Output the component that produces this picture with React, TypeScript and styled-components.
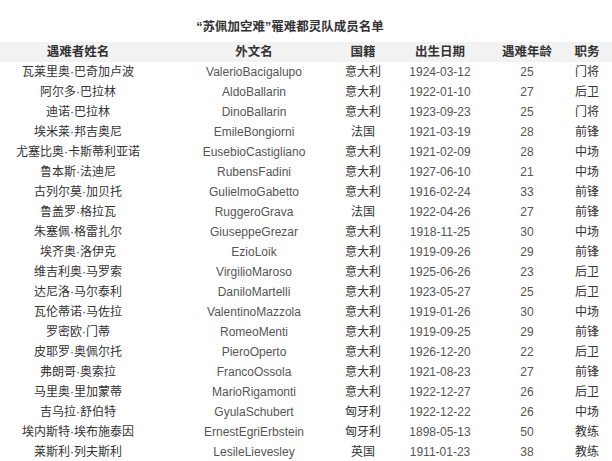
import React from 'react'
import styled, { createGlobalStyle } from 'styled-components'

const GlobalStyle = createGlobalStyle`
    html, body {
        margin: 0;
        padding: 0;
        background: #ffffff;
    }
    body {
        font-family: 'Liberation Sans', Arial, 'Noto Sans CJK SC', sans-serif;
        overflow: hidden;
    }
`

type Column = { width: number; padLeft: number; padRight: number }

// widths sum to the page width, padding nudges each centre onto the reference
const columns: Column[] = [
    { width: 166, padLeft: 0, padRight: 10 },
    { width: 142, padLeft: 34, padRight: 0 },
    { width: 94, padLeft: 16, padRight: 0 },
    { width: 82, padLeft: 0, padRight: 6 },
    { width: 73, padLeft: 13, padRight: 0 },
    { width: 55, padLeft: 5, padRight: 0 },
]

const headers = ['遇难者姓名', '外文名', '国籍', '出生日期', '遇难年龄', '职务']

const players: string[][] = [
    ['瓦莱里奥·巴奇加卢波', 'ValerioBacigalupo', '意大利', '1924-03-12', '25', '门将'],
    ['阿尔多·巴拉林', 'AldoBallarin', '意大利', '1922-01-10', '27', '后卫'],
    ['迪诺·巴拉林', 'DinoBallarin', '意大利', '1923-09-23', '25', '门将'],
    ['埃米莱·邦吉奥尼', 'EmileBongiorni', '法国', '1921-03-19', '28', '前锋'],
    ['尤塞比奥·卡斯蒂利亚诺', 'EusebioCastigliano', '意大利', '1921-02-09', '28', '中场'],
    ['鲁本斯·法迪尼', 'RubensFadini', '意大利', '1927-06-10', '21', '中场'],
    ['古列尔莫·加贝托', 'GulielmoGabetto', '意大利', '1916-02-24', '33', '前锋'],
    ['鲁盖罗·格拉瓦', 'RuggeroGrava', '法国', '1922-04-26', '27', '前锋'],
    ['朱塞佩·格雷扎尔', 'GiuseppeGrezar', '意大利', '1918-11-25', '30', '中场'],
    ['埃齐奥·洛伊克', 'EzioLoik', '意大利', '1919-09-26', '29', '前锋'],
    ['维吉利奥·马罗索', 'VirgilioMaroso', '意大利', '1925-06-26', '23', '后卫'],
    ['达尼洛·马尔泰利', 'DaniloMartelli', '意大利', '1923-05-27', '25', '后卫'],
    ['瓦伦蒂诺·马佐拉', 'ValentinoMazzola', '意大利', '1919-01-26', '30', '中场'],
    ['罗密欧·门蒂', 'RomeoMenti', '意大利', '1919-09-25', '29', '前锋'],
    ['皮耶罗·奥佩尔托', 'PieroOperto', '意大利', '1926-12-20', '22', '后卫'],
    ['弗朗哥·奥索拉', 'FrancoOssola', '意大利', '1921-08-23', '27', '前锋'],
    ['马里奥·里加蒙蒂', 'MarioRigamonti', '意大利', '1922-12-27', '26', '后卫'],
    ['吉乌拉·舒伯特', 'GyulaSchubert', '匈牙利', '1922-12-22', '26', '中场'],
    ['埃内斯特·埃布施泰因', 'ErnestEgriErbstein', '匈牙利', '1898-05-13', '50', '教练'],
    ['莱斯利·列夫斯利', 'LesileLievesley', '英国', '1911-01-23', '38', '教练'],
]

const Page = styled.div`
    width: 612px;
    height: 461px;
    overflow: hidden;
`

const Title = styled.h3`
    margin: 0;
    padding: 18px 0 6px;
    width: 580px;
    text-align: center;
    font-size: 12.5px;
    line-height: 18px;
    font-weight: bold;
    color: #333333;
`

const Table = styled.div`
    display: grid;
    grid-template-columns: ${columns.map((c) => `${c.width}px`).join(' ')};
    width: 612px;
`

const Row = styled.div<{ $head?: boolean }>`
    display: contents;

    > div {
        background: ${(p) => (p.$head ? '#f2f2f2' : 'transparent')};
        font-weight: ${(p) => (p.$head ? 'bold' : 'normal')};
        font-size: ${(p) => (p.$head ? '12.5px' : '12px')};
    }
`

const Cell = styled.div<{ $padLeft: number; $padRight: number; $latin?: boolean }>`
    height: 20px;
    line-height: 20px;
    padding-left: ${(p) => p.$padLeft}px;
    padding-right: ${(p) => p.$padRight}px;
    text-align: center;
    white-space: nowrap;
    color: ${(p) => (p.$latin ? '#555555' : '#333333')};
`

export default function App() {
    return (
        <Page>
            <GlobalStyle />
            <Title>“苏佩加空难”罹难都灵队成员名单</Title>
            <Table>
                <Row $head>
                    {headers.map((h, i) => (
                        <Cell key={h} $padLeft={columns[i].padLeft} $padRight={columns[i].padRight}>
                            {h}
                        </Cell>
                    ))}
                </Row>
                {players.map((row) => (
                    <Row key={row[1]}>
                        {row.map((value, i) => (
                            <Cell
                                key={i}
                                $padLeft={columns[i].padLeft}
                                $padRight={columns[i].padRight}
                                $latin={i === 1 || i === 3 || i === 4}
                            >
                                {value}
                            </Cell>
                        ))}
                    </Row>
                ))}
            </Table>
        </Page>
    )
}
